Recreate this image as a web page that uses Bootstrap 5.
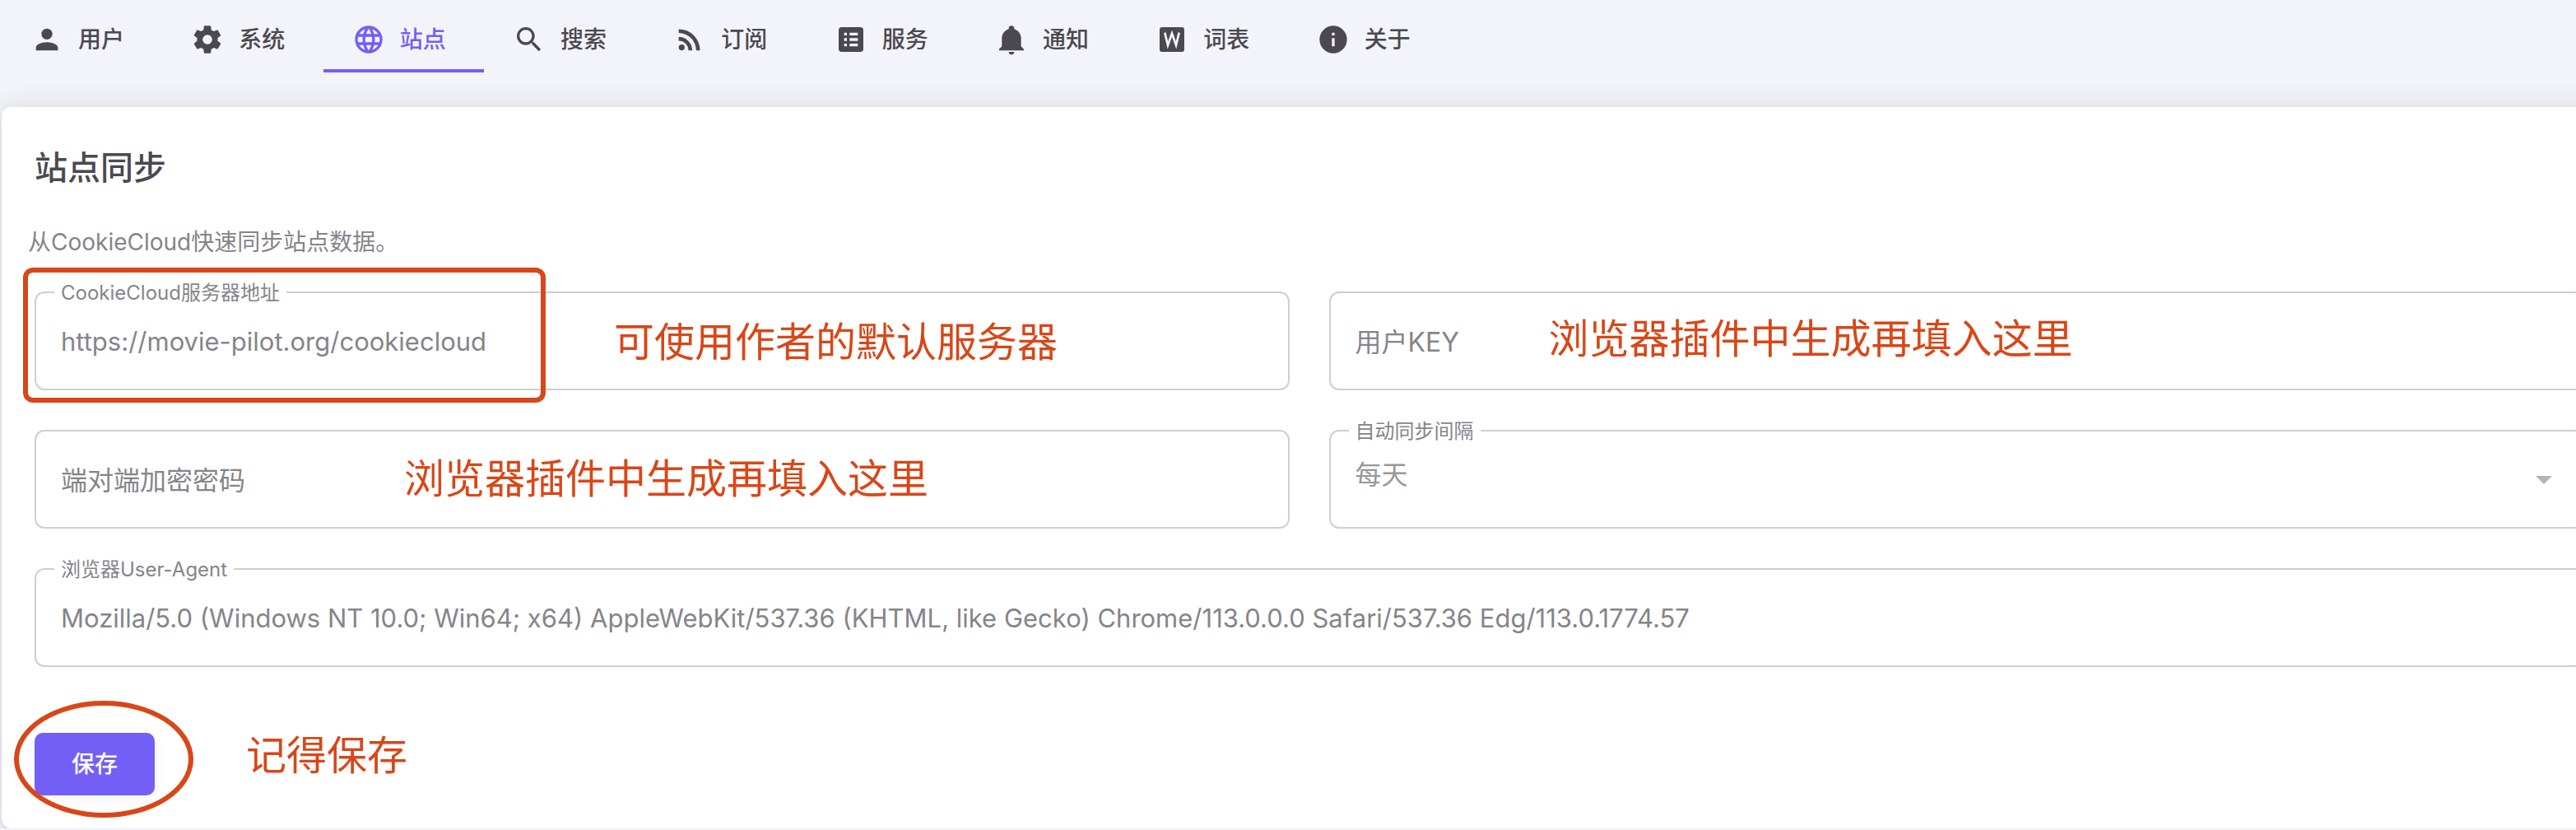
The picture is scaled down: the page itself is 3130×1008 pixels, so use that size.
<!DOCTYPE html>
<html lang="zh-CN">
<head>
<meta charset="utf-8">
<meta name="viewport" content="width=device-width, initial-scale=1">
<title>站点同步</title>
<link href="https://cdn.jsdelivr.net/npm/bootstrap@5.3.0/dist/css/bootstrap.min.css" rel="stylesheet">
<style>
:root { --ink: #4b4850; --soft: #85848a; --brand: #735ff6; --line: #cfcfcf; --note: #d84718; }
body { background: #f3f4fa; color: var(--ink); font-family: Inter, "Noto Sans CJK SC", sans-serif; font-size: 28px; line-height: 40px; overflow-x: hidden; }

.tab-bar { width: 1758px; max-width: 100%; margin: 0 0 42px 2px; }
.tab-bar .nav-link { height: 88px; padding: 12px 0 0 35px; gap: 18px; color: var(--ink); font-weight: 500; border: 0; border-bottom: 4px solid transparent; border-radius: 0; }
.tab-bar .nav-link.active { color: var(--brand); border-bottom-color: var(--brand); }
.tab-bar svg { width: 40px; height: 40px; fill: currentColor; flex: none; }

/* The panel runs on past the right edge of the window. */
.panel { margin-left: 2px; width: calc(100% + 47px); border: 0; border-radius: 12px; padding: 42px 32px 40px; color: inherit;
  box-shadow: 0 4px 34px rgba(58, 53, 65, .18), 0 4px 4px rgba(58, 53, 65, .06); }
.panel-title { font-size: 40px; line-height: 64px; font-weight: 500; }
.panel-hint { margin: 38px 0 40px; color: var(--soft); }
.field-grid { --bs-gutter-x: 48px; --bs-gutter-y: 48px; }

.field { position: relative; }
.field .form-control, .field .form-select { height: 120px; padding: 0 30px; border: 2px solid var(--line); border-radius: 12px; background-color: #fff; color: var(--soft); font-size: 31px; line-height: 48px; box-shadow: none; }
.field .form-select { padding-bottom: 10px; color: #98979b; background-image: none; font-size: 32px; }
.field-name { position: absolute; left: 24px; top: -16px; padding: 0 8px; background: #fff; color: var(--soft); font-size: 24px; line-height: 36px; }
.field-rest { position: absolute; left: 32px; top: 38px; color: var(--soft); font-size: 32px; line-height: 48px; pointer-events: none; }
.caret { position: absolute; right: 38px; top: 56px; border: 10px solid transparent; border-top-color: #b4b3b9; border-bottom: 0; pointer-events: none; }

.save { width: 146px; height: 76px; margin-top: 80px; padding: 0; border: 0; border-radius: 10px; font-size: 28px; font-weight: 500; box-shadow: 0 4px 16px rgba(58, 53, 65, .06); }
.save, .save:hover { background: var(--brand); color: #fff; }

/* Hand-made marks laid over the form. */
.remark { position: absolute; color: var(--note); font-size: 49px; line-height: 60px; white-space: nowrap; pointer-events: none; }
.remark-server { left: 704px; top: 32px; }
.remark-key { left: 267px; top: 28px; }
.remark-pass { left: 449px; top: 30px; }
.remark-save { left: 257px; top: 78px; }
.ring-box, .ring-oval { position: absolute; border: 6px solid var(--note); pointer-events: none; }
.ring-box { left: -14px; top: -29px; width: 635px; height: 164px; border-radius: 12px; }
.ring-oval { left: -25px; top: 41px; width: 218px; height: 142px; border-radius: 50%; }
</style>
</head>
<body>
<nav aria-label="设置">
  <ul class="nav nav-fill tab-bar flex-nowrap">
    <li class="nav-item flex-fill"><a class="nav-link d-flex align-items-center" href="#user"><svg viewBox="0 0 24 24" aria-hidden="true"><path d="M12,4A4,4 0 0,1 16,8A4,4 0 0,1 12,12A4,4 0 0,1 8,8A4,4 0 0,1 12,4M12,14C16.42,14 20,15.79 20,18V20H4V18C4,15.79 7.58,14 12,14Z"/></svg>用户</a></li>
    <li class="nav-item flex-fill"><a class="nav-link d-flex align-items-center" href="#system"><svg viewBox="0 0 24 24" aria-hidden="true"><path d="M12,15.5A3.5,3.5 0 0,1 8.5,12A3.5,3.5 0 0,1 12,8.5A3.5,3.5 0 0,1 15.5,12A3.5,3.5 0 0,1 12,15.5M19.43,12.97C19.47,12.65 19.5,12.33 19.5,12C19.5,11.67 19.47,11.34 19.43,11L21.54,9.37C21.73,9.22 21.78,8.95 21.66,8.73L19.66,5.27C19.54,5.05 19.27,4.96 19.05,5.05L16.56,6.05C16.04,5.66 15.5,5.32 14.87,5.07L14.5,2.42C14.46,2.18 14.25,2 14,2H10C9.75,2 9.54,2.18 9.5,2.42L9.13,5.07C8.5,5.32 7.96,5.66 7.44,6.05L4.95,5.05C4.73,4.96 4.46,5.05 4.34,5.27L2.34,8.73C2.21,8.95 2.27,9.22 2.46,9.37L4.57,11C4.53,11.34 4.5,11.67 4.5,12C4.5,12.33 4.53,12.65 4.57,12.97L2.46,14.63C2.27,14.78 2.21,15.05 2.34,15.27L4.34,18.73C4.46,18.95 4.73,19.03 4.95,18.95L7.44,17.94C7.96,18.34 8.5,18.68 9.13,18.93L9.5,21.58C9.54,21.82 9.75,22 10,22H14C14.25,22 14.46,21.82 14.5,21.58L14.87,18.93C15.5,18.67 16.04,18.34 16.56,17.94L19.05,18.95C19.27,19.03 19.54,18.95 19.66,18.73L21.66,15.27C21.78,15.05 21.73,14.78 21.54,14.63L19.43,12.97Z"/></svg>系统</a></li>
    <li class="nav-item flex-fill"><a class="nav-link active d-flex align-items-center" aria-current="page" href="#site"><svg viewBox="0 0 24 24" aria-hidden="true"><path d="M16.36,14C16.44,13.34 16.5,12.68 16.5,12C16.5,11.32 16.44,10.66 16.36,10H19.74C19.9,10.64 20,11.31 20,12C20,12.69 19.9,13.36 19.74,14M14.59,19.56C15.19,18.45 15.65,17.25 15.97,16H18.92C17.96,17.65 16.43,18.93 14.59,19.56M14.34,14H9.66C9.56,13.34 9.5,12.68 9.5,12C9.5,11.32 9.56,10.65 9.66,10H14.34C14.43,10.65 14.5,11.32 14.5,12C14.5,12.68 14.43,13.34 14.34,14M12,19.96C11.17,18.76 10.5,17.43 10.09,16H13.91C13.5,17.43 12.83,18.76 12,19.96M8,8H5.08C6.03,6.34 7.57,5.06 9.4,4.44C8.8,5.55 8.35,6.75 8,8M5.08,16H8C8.35,17.25 8.8,18.45 9.4,19.56C7.57,18.93 6.03,17.65 5.08,16M4.26,14C4.1,13.36 4,12.69 4,12C4,11.31 4.1,10.64 4.26,10H7.64C7.56,10.66 7.5,11.32 7.5,12C7.5,12.68 7.56,13.34 7.64,14M12,4.03C12.83,5.23 13.5,6.57 13.91,8H10.09C10.5,6.57 11.17,5.23 12,4.03M18.92,8H15.97C15.65,6.75 15.19,5.55 14.59,4.44C16.43,5.07 17.96,6.34 18.92,8M12,2C6.47,2 2,6.5 2,12A10,10 0 0,0 12,22A10,10 0 0,0 22,12A10,10 0 0,0 12,2Z"/></svg>站点</a></li>
    <li class="nav-item flex-fill"><a class="nav-link d-flex align-items-center" href="#search"><svg viewBox="0 0 24 24" aria-hidden="true"><path d="M9.5,3A6.5,6.5 0 0,1 16,9.5C16,11.11 15.41,12.59 14.44,13.73L14.71,14H15.5L20.5,19L19,20.5L14,15.5V14.71L13.73,14.44C12.59,15.41 11.11,16 9.5,16A6.5,6.5 0 0,1 3,9.5A6.5,6.5 0 0,1 9.5,3M9.5,5C7,5 5,7 5,9.5C5,12 7,14 9.5,14C12,14 14,12 14,9.5C14,7 12,5 9.5,5Z"/></svg>搜索</a></li>
    <li class="nav-item flex-fill"><a class="nav-link d-flex align-items-center" href="#subscribe"><svg viewBox="0 0 24 24" aria-hidden="true"><path d="M6.18,15.64A2.18,2.18 0 0,1 8.36,17.82C8.36,19 7.38,20 6.18,20C5,20 4,19 4,17.82A2.18,2.18 0 0,1 6.18,15.64M4,4.44A15.56,15.56 0 0,1 19.56,20H16.73A12.73,12.73 0 0,0 4,7.27V4.44M4,10.1A9.9,9.9 0 0,1 13.9,20H11.07A7.07,7.07 0 0,0 4,12.93V10.1Z"/></svg>订阅</a></li>
    <li class="nav-item flex-fill"><a class="nav-link d-flex align-items-center" href="#service"><svg viewBox="0 0 24 24" aria-hidden="true"><path d="M19 3H5C3.9 3 3 3.9 3 5V19C3 20.1 3.9 21 5 21H19C20.1 21 21 20.1 21 19V5C21 3.9 20.1 3 19 3M7 7H9V9H7V7M7 11H9V13H7V11M7 15H9V17H7V15M17 17H11V15H17V17M17 13H11V11H17V13M17 9H11V7H17V9Z"/></svg>服务</a></li>
    <li class="nav-item flex-fill"><a class="nav-link d-flex align-items-center" href="#notice"><svg viewBox="0 0 24 24" aria-hidden="true"><path d="M21,19V20H3V19L5,17V11C5,7.9 7.03,5.17 10,4.29C10,4.19 10,4.1 10,4A2,2 0 0,1 12,2A2,2 0 0,1 14,4C14,4.1 14,4.19 14,4.29C16.97,5.17 19,7.9 19,11V17L21,19M14,21A2,2 0 0,1 12,23A2,2 0 0,1 10,21"/></svg>通知</a></li>
    <li class="nav-item flex-fill"><a class="nav-link d-flex align-items-center" href="#words"><svg viewBox="0 0 24 24" aria-hidden="true"><rect x="3" y="3" width="18" height="18" rx="2"/><polyline points="6.8,7 9,16.2 12,7.6 15,16.2 17.2,7" fill="none" stroke="#f3f4fa" stroke-width="1.6"/></svg>词表</a></li>
    <li class="nav-item flex-fill"><a class="nav-link d-flex align-items-center" href="#about"><svg viewBox="0 0 24 24" aria-hidden="true"><path d="M13,9H11V7H13M13,17H11V11H13M12,2A10,10 0 0,0 2,12A10,10 0 0,0 12,22A10,10 0 0,0 22,12A10,10 0 0,0 12,2Z"/></svg>关于</a></li>
  </ul>
</nav>

<main class="card panel">
  <h1 class="panel-title mx-2 mb-0">站点同步</h1>
  <p class="panel-hint">从CookieCloud快速同步站点数据。</p>
  <form class="mx-2">
    <div class="row field-grid">
      <div class="col-md-6">
        <div class="field">
          <input class="form-control" type="text" id="server" value="https://movie-pilot.org/cookiecloud">
          <label class="field-name" for="server">CookieCloud服务器地址</label>
          <span class="remark remark-server">可使用作者的默认服务器</span>
          <span class="ring-box"></span>
        </div>
      </div>
      <div class="col-md-6">
        <div class="field">
          <input class="form-control" type="text" id="key">
          <label class="field-rest" for="key">用户KEY</label>
          <span class="remark remark-key">浏览器插件中生成再填入这里</span>
        </div>
      </div>
      <div class="col-md-6">
        <div class="field">
          <input class="form-control" type="password" id="pass">
          <label class="field-rest" for="pass">端对端加密密码</label>
          <span class="remark remark-pass">浏览器插件中生成再填入这里</span>
        </div>
      </div>
      <div class="col-md-6">
        <div class="field">
          <select class="form-select" id="interval"><option>每天</option></select>
          <label class="field-name" for="interval">自动同步间隔</label>
          <span class="caret"></span>
        </div>
      </div>
      <div class="col-12">
        <div class="field">
          <input class="form-control" type="text" id="agent" value="Mozilla/5.0 (Windows NT 10.0; Win64; x64) AppleWebKit/537.36 (KHTML, like Gecko) Chrome/113.0.0.0 Safari/537.36 Edg/113.0.1774.57">
          <label class="field-name" for="agent">浏览器User-Agent</label>
        </div>
      </div>
    </div>
    <div class="position-relative d-flex">
      <button class="btn save" type="button">保存</button>
      <span class="remark remark-save">记得保存</span>
      <span class="ring-oval"></span>
    </div>
  </form>
</main>
<script src="https://cdn.jsdelivr.net/npm/bootstrap@5.3.0/dist/js/bootstrap.bundle.min.js"></script>
</body>
</html>
